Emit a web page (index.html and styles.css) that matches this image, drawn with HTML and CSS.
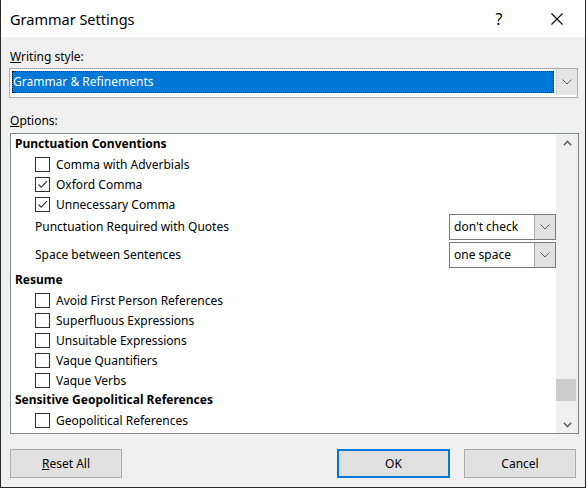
FILE: index.html
```html
<!DOCTYPE html>
<html>
<head>
<meta charset="utf-8">
<link rel="stylesheet" href="styles.css">
</head>
<body>
<div class="window">
  <div class="titlebar">
    <div class="title">Grammar Settings</div>
    <div class="tb-btn help">?</div>
    <div class="tb-btn close">
      <svg width="12" height="12" viewBox="0 0 12 12"><path d="M0.5 0.5 L11.5 11.5 M11.5 0.5 L0.5 11.5" stroke="#000" stroke-width="1.1" fill="none"/></svg>
    </div>
  </div>
  <div class="content">
    <div class="label"><u>W</u>riting style:</div>
    <div class="combo">
      <div class="combo-field"><span class="focus">Grammar &amp; Refinements</span></div>
      <div class="combo-btn">
        <svg width="10" height="6" viewBox="0 0 10 6"><path d="M0.5 0.5 L5 5 L9.5 0.5" stroke="#606060" stroke-width="1" fill="none"/></svg>
      </div>
    </div>
    <div class="label options-label"><u>O</u>ptions:</div>
    <div class="listbox">
      <div class="list">
        <div class="heading">Punctuation Conventions</div>
        <div class="item"><span class="cb"></span>Comma with Adverbials</div>
        <div class="item"><span class="cb"><svg width="13" height="13" viewBox="0 0 13 13"><path d="M2.5 6.5 L5.2 9.2 L11 3.2" stroke="#333" stroke-width="1.1" fill="none"/></svg></span>Oxford Comma</div>
        <div class="item"><span class="cb"><svg width="13" height="13" viewBox="0 0 13 13"><path d="M2.5 6.5 L5.2 9.2 L11 3.2" stroke="#333" stroke-width="1.1" fill="none"/></svg></span>Unnecessary Comma</div>
        <div class="select-row">
          <span class="sr-label">Punctuation Required with Quotes</span>
          <div class="select"><span class="sel-text">don't check</span><span class="sel-btn"><svg width="10" height="6" viewBox="0 0 10 6"><path d="M0.5 0.5 L5 5 L9.5 0.5" stroke="#606060" stroke-width="1" fill="none"/></svg></span></div>
        </div>
        <div class="select-row">
          <span class="sr-label">Space between Sentences</span>
          <div class="select"><span class="sel-text">one space</span><span class="sel-btn"><svg width="10" height="6" viewBox="0 0 10 6"><path d="M0.5 0.5 L5 5 L9.5 0.5" stroke="#606060" stroke-width="1" fill="none"/></svg></span></div>
        </div>
        <div class="heading">Resume</div>
        <div class="item"><span class="cb"></span>Avoid First Person References</div>
        <div class="item"><span class="cb"></span>Superfluous Expressions</div>
        <div class="item"><span class="cb"></span>Unsuitable Expressions</div>
        <div class="item"><span class="cb"></span>Vaque Quantifiers</div>
        <div class="item"><span class="cb"></span>Vaque Verbs</div>
        <div class="heading">Sensitive Geopolitical References</div>
        <div class="item"><span class="cb"></span>Geopolitical References</div>
      </div>
      <div class="scrollbar">
        <div class="sb-arrow"><svg width="9" height="6" viewBox="0 0 9 6"><path d="M0.8 5.2 L4.5 1.5 L8.2 5.2" stroke="#606060" stroke-width="1.6" fill="none"/></svg></div>
        <div class="sb-track"><div class="sb-thumb"></div></div>
        <div class="sb-arrow"><svg width="9" height="6" viewBox="0 0 9 6"><path d="M0.8 0.8 L4.5 4.5 L8.2 0.8" stroke="#606060" stroke-width="1.6" fill="none"/></svg></div>
      </div>
    </div>
    <div class="buttons">
      <div class="btn"><u>R</u>eset All</div>
      <div class="spacer"></div>
      <div class="btn default">OK</div>
      <div class="btn">Cancel</div>
    </div>
  </div>
</div>
</body>
</html>
```

FILE: styles.css
```css
html, body {
  margin: 0;
  padding: 0;
  background: #ffffff;
}
body {
  font-family: "Noto Sans", "Open Sans", sans-serif;
  font-size: 12px;
  color: #000;
}
.window {
  width: 584px;
  height: 487px;
  border-left: 1px solid #2b2b2b;
  border-right: 1px solid #2b2b2b;
  border-bottom: 1px solid #2b2b2b;
  background: #f0f0f0;
  display: flex;
  flex-direction: column;
}
.titlebar {
  height: 37px;
  background: #fff;
  display: flex;
  align-items: center;
}
.title {
  font-size: 14.5px;
  padding-left: 9px;
  flex: 1;
}
.tb-btn {
  height: 37px;
  display: flex;
  align-items: center;
  justify-content: center;
}
.help {
  width: 46px;
  font-size: 16px;
  margin-right: 12px;
}
.close {
  width: 46px;
  margin-right: 5px;
}
.content {
  flex: 1;
  padding: 0 7px 0 8px;
  display: flex;
  flex-direction: column;
}
.label {
  height: 16px;
  line-height: 16px;
  margin-top: 12px;
  padding-left: 1px;
}
.options-label {
  margin-top: 15px;
}
.combo {
  margin-top: 3px;
  height: 26px;
  border: 1px solid #adadad;
  background: #fff;
  display: flex;
  padding: 2px 0 0 2px;
  box-sizing: content-box;
}
.combo-field {
  flex: 1;
  height: 22px;
  background: #0078d7;
  color: #fff;
  display: flex;
}
.focus {
  flex: 1;
  border: 1px dotted #ffb000;
  outline: 1px dotted #000;
  outline-offset: -1px;
  line-height: 20px;
  padding-left: 0;
}
.combo-btn {
  width: 20px;
  margin-top: -2px;
  margin-left: 2px;
  height: 26px;
  background: #e5e5e5;
  border-left: 1px solid #cfcfcf;
  display: flex;
  align-items: center;
  justify-content: center;
}
.listbox {
  margin-top: 4px;
  margin-left: 1px;
  margin-right: -1px;
  height: 299px;
  border: 1px solid #828790;
  background: #fff;
  display: flex;
}
.list {
  flex: 1;
  display: flex;
  flex-direction: column;
}
.heading {
  height: 20px;
  line-height: 19px;
  font-weight: bold;
  padding-left: 4px;
}
.item {
  height: 20px;
  display: flex;
  align-items: center;
  padding-left: 24px;
}
.cb {
  width: 13px;
  height: 13px;
  border: 1px solid #333;
  background: #fff;
  margin-right: 6px;
  display: flex;
}
.select-row {
  height: 28px;
  display: flex;
  align-items: flex-start;
  padding-left: 24px;
}
.sr-label {
  flex: 1;
  line-height: 26px;
}
.select {
  width: 105px;
  height: 24px;
  border: 1px solid #7a7a7a;
  display: flex;
}
.sel-text {
  flex: 1;
  line-height: 24px;
  padding-left: 4px;
}
.sel-btn {
  width: 20px;
  background: #e1e1e1;
  border-left: 1px solid #adadad;
  display: flex;
  align-items: center;
  justify-content: center;
}
.scrollbar {
  width: 22px;
  background: #f0f0f0;
  display: flex;
  flex-direction: column;
}
.sb-arrow {
  height: 17px;
  display: flex;
  align-items: center;
  justify-content: center;
}
.sb-track {
  flex: 1;
  display: flex;
  flex-direction: column;
  justify-content: flex-end;
}
.sb-thumb {
  height: 22px;
  margin: 0 2px 15px 0;
  background: #cdcdcd;
}
.buttons {
  margin-top: 15px;
  display: flex;
  padding-left: 1px;
  padding-right: 2px;
}
.spacer {
  flex: 1;
}
.btn {
  width: 110px;
  height: 27px;
  border: 1px solid #adadad;
  background: #e1e1e1;
  display: flex;
  align-items: center;
  justify-content: center;
}
.btn.default {
  width: 109px;
  height: 25px;
  border: 2px solid #0078d7;
  margin-right: 14px;
}
```
